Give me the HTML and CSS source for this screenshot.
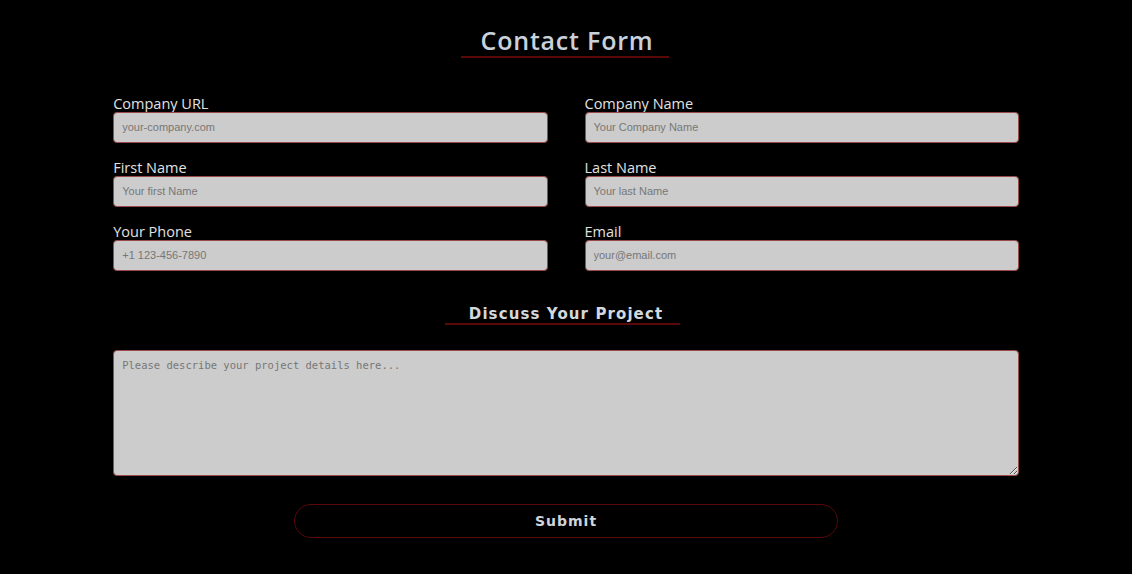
FILE: index.html
```html
<!DOCTYPE html>
<html lang="en">
<head>
<meta charset="utf-8">
<title>Contact Form</title>
<link rel="stylesheet" href="styles.css">
</head>
<body>
<main class="page">
  <header class="title-wrap">
    <h1 class="title">Contact Form</h1>
  </header>
  <form class="form">
    <div class="grid">
      <div class="field">
        <label class="label">Company URL</label>
        <input class="input" type="text" placeholder="your-company.com">
      </div>
      <div class="field">
        <label class="label">Company Name</label>
        <input class="input" type="text" placeholder="Your Company Name">
      </div>
      <div class="field">
        <label class="label">First Name</label>
        <input class="input" type="text" placeholder="Your first Name">
      </div>
      <div class="field">
        <label class="label">Last Name</label>
        <input class="input" type="text" placeholder="Your last Name">
      </div>
      <div class="field">
        <label class="label">Your Phone</label>
        <input class="input" type="text" placeholder="+1 123-456-7890">
      </div>
      <div class="field">
        <label class="label">Email</label>
        <input class="input" type="text" placeholder="your@email.com">
      </div>
    </div>
    <div class="sub-wrap">
      <h2 class="subtitle">Discuss Your Project</h2>
    </div>
    <textarea class="textarea" placeholder="Please describe your project details here..."></textarea>
    <div class="actions">
      <button class="submit" type="button">Submit</button>
    </div>
  </form>
</main>
</body>
</html>
```
FILE: styles.css
```css
html, body {
  margin: 0;
  padding: 0;
  background: #000;
}
body {
  font-family: "Open Sans", "Liberation Sans", sans-serif;
  color: #e0e0e0;
}
.page {
  width: 80%;
  margin: 0 auto;
}
.title-wrap {
  display: flex;
  justify-content: center;
  padding-top: 25px;
}
.title {
  margin: 0;
  font-family: "Open Sans", sans-serif;
  font-size: 25px;
  font-weight: 600;
  letter-spacing: 0.8px;
  line-height: 30px;
  color: #c9d1da;
  padding: 0 15px 1px 20px;
  margin-right: 3px;
  border-bottom: 2px solid #5a0808;
}
.form {
  margin-top: 38px;
}
.grid {
  display: grid;
  grid-template-columns: 1fr 1fr;
  column-gap: 37px;
  row-gap: 17px;
}
.field {
  display: flex;
  flex-direction: column;
}
.label {
  font-size: 14.5px;
  line-height: 16px;
  color: #e2e2e2;
}
.input {
  box-sizing: border-box;
  height: 31px;
  background: #cccccc;
  border: 1px solid #9a4a4a;
  border-radius: 4px;
  padding: 0 8px 1px;
  font-family: "Liberation Sans", Arial, sans-serif;
  font-size: 11px;
  color: #333;
  outline: none;
}
.input::placeholder {
  color: #777;
}
.sub-wrap {
  display: flex;
  justify-content: center;
  margin-top: 34px;
}
.subtitle {
  margin: 0 7px 0 0;
  font-family: "DejaVu Sans", sans-serif;
  font-size: 15px;
  font-weight: bold;
  letter-spacing: 1.1px;
  line-height: 18px;
  color: #d3d8de;
  padding: 0 17px 0 24px;
  border-bottom: 2px solid #5a0808;
}
.textarea {
  display: block;
  box-sizing: border-box;
  width: 100%;
  height: 126px;
  margin-top: 25px;
  background: #cccccc;
  border: 1px solid #9a4a4a;
  border-radius: 4px;
  padding: 8px;
  font-family: "DejaVu Sans Mono", "Liberation Mono", monospace;
  font-size: 10.5px;
  color: #333;
  outline: none;
}
.textarea::placeholder {
  color: #777;
}
.actions {
  display: flex;
  justify-content: center;
  margin-top: 28px;
}
.submit {
  width: 60%;
  height: 34px;
  background: #000;
  border: 1px solid #5a0808;
  border-radius: 17px;
  font-family: "DejaVu Sans", sans-serif;
  font-size: 14px;
  font-weight: bold;
  letter-spacing: 1px;
  color: #d0d5dc;
  cursor: pointer;
}
```
